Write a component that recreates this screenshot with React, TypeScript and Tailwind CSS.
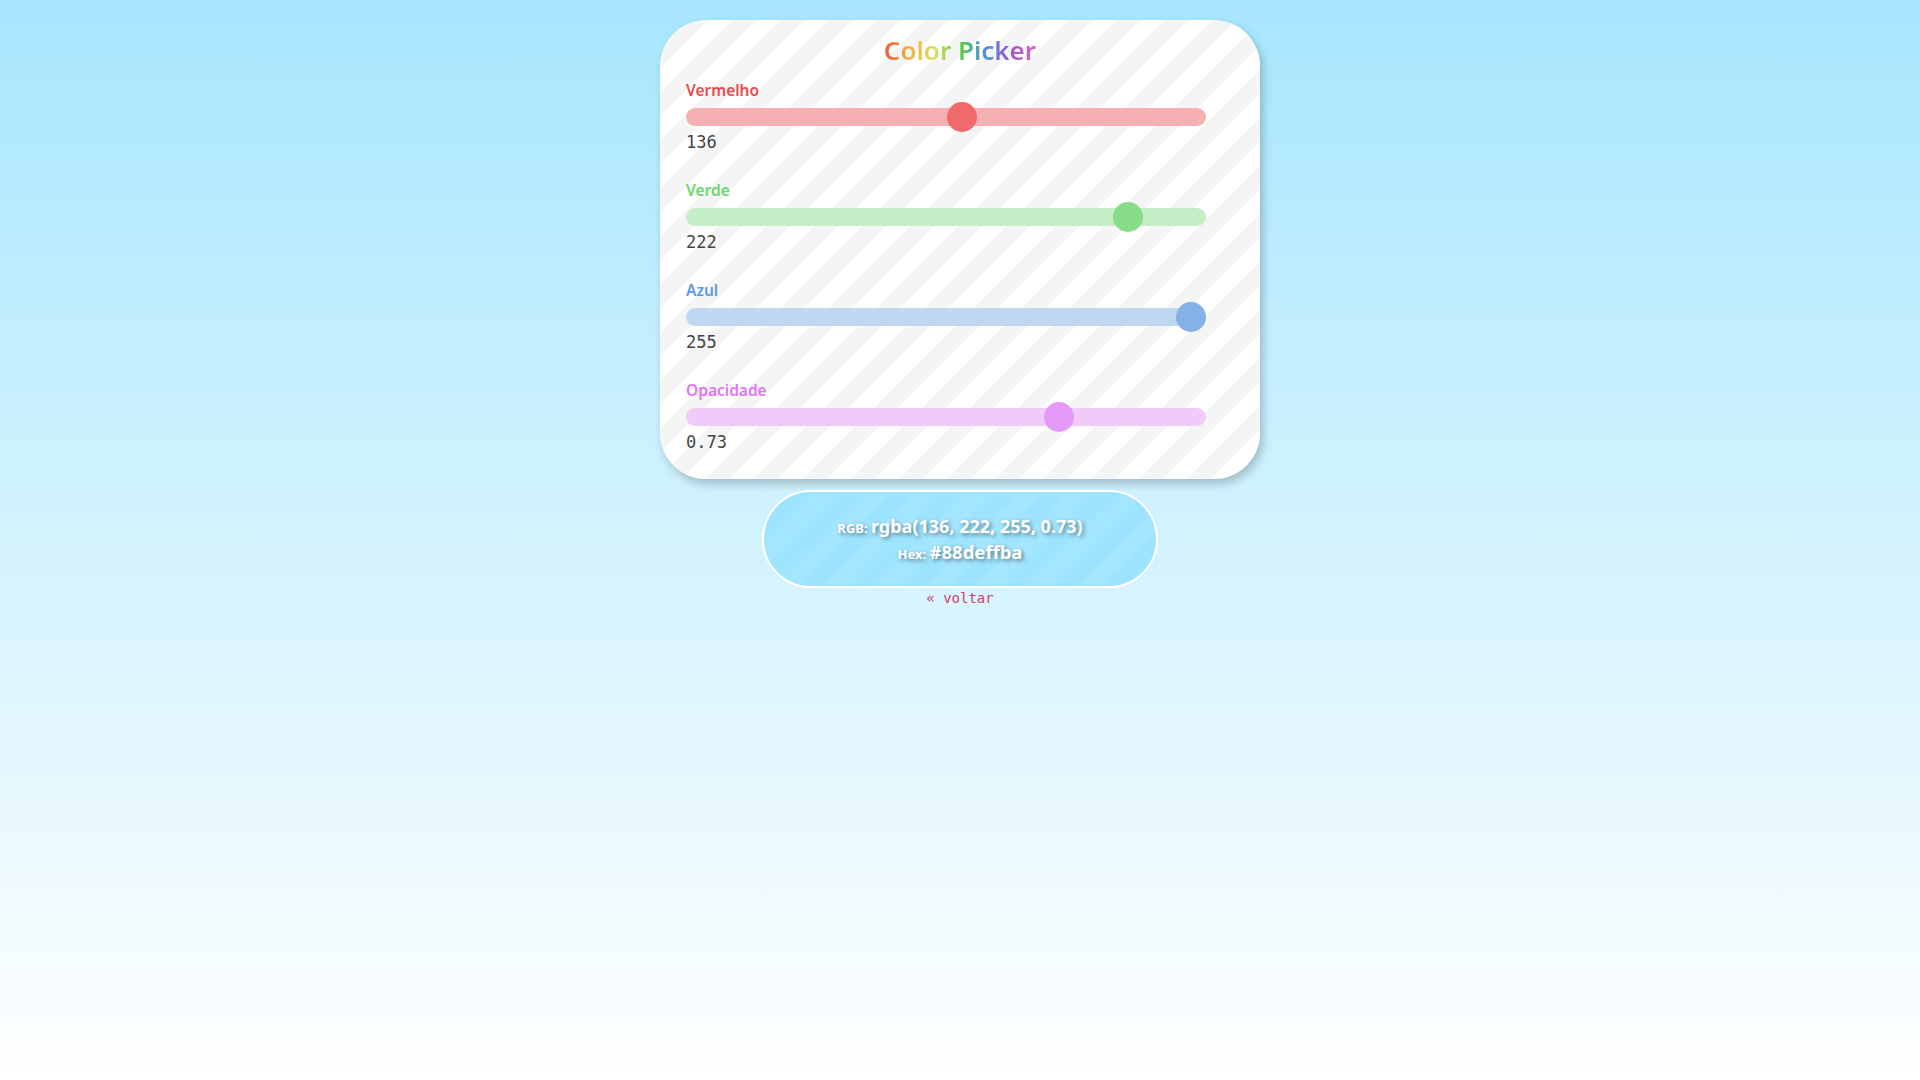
import React from 'react';

type Channel = {
  label: string;
  value: number;
  max: number;
  display: string;
  labelColor: string;
  trackColor: string;
  thumbColor: string;
};

const channels: Channel[] = [
  { label: 'Vermelho', value: 136, max: 255, display: '136', labelColor: 'text-[#f2474a]', trackColor: 'bg-[#f5b1b1]', thumbColor: 'bg-[#f06a6b]' },
  { label: 'Verde', value: 222, max: 255, display: '222', labelColor: 'text-[#6bd66b]', trackColor: 'bg-[#c4eec6]', thumbColor: 'bg-[#88dd88]' },
  { label: 'Azul', value: 255, max: 255, display: '255', labelColor: 'text-[#5d9be8]', trackColor: 'bg-[#c0d7f2]', thumbColor: 'bg-[#84b2e6]' },
  { label: 'Opacidade', value: 0.73, max: 1, display: '0.73', labelColor: 'text-[#e274f5]', trackColor: 'bg-[#f0cbfa]', thumbColor: 'bg-[#e59af9]' },
];

const Slider: React.FC<{ c: Channel }> = ({ c }) => {
  // thumb travels inside the track, 30px wide
  const pct = c.value / c.max;
  return (
    <div className="flex flex-col">
      <span className={`h-5 text-[15.5px] leading-5 font-semibold ${c.labelColor}`}>{c.label}</span>
      <div className={`relative mt-2 h-[18px] w-[520px] rounded-full ${c.trackColor}`}>
        <div
          className={`absolute -top-[6px] h-[30px] w-[30px] rounded-full ${c.thumbColor}`}
          style={{ left: `calc(${pct} * (100% - 30px))` }}
        />
      </div>
      <span className="mt-1 h-6 text-[17px] leading-6 text-[#444] font-['DejaVu_Sans_Mono',monospace]">{c.display}</span>
    </div>
  );
};

const App: React.FC = () => {
  return (
    <div className="min-h-screen w-full bg-[linear-gradient(to_bottom,#a7e6fe,#ffffff)] font-['Noto_Sans','Lato',sans-serif]">
      <div className="flex flex-col items-center pt-5">
        <div className="w-[600px] rounded-[46px] bg-[repeating-linear-gradient(135deg,#ffffff_0px,#ffffff_17px,#f5f5f5_17px,#f5f5f5_34px)] pl-[26px] pt-3 pb-[25px] shadow-[3px_5px_10px_rgba(0,0,0,0.22)]">
          <h1 className="pr-[26px] text-center text-[26px] leading-9 font-semibold">
            <span className="bg-[linear-gradient(to_right,#ee5a3c,#f0b040,#d9e060,#5ccc40,#4a90e0,#9a5ad0,#e060c0)] bg-clip-text text-transparent">
              Color Picker
            </span>
          </h1>
          <div className="mt-3 flex flex-col gap-[26px]">
            {channels.map((c) => (
              <Slider key={c.label} c={c} />
            ))}
          </div>
        </div>

        <div className="mt-[11px] flex h-[98px] w-[396px] flex-col items-center justify-center rounded-full border-2 border-white bg-[repeating-linear-gradient(135deg,rgba(255,255,255,0.08)_0px,rgba(255,255,255,0.08)_18px,transparent_18px,transparent_36px),linear-gradient(rgba(136,222,255,0.73),rgba(136,222,255,0.73))] text-white [text-shadow:2px_2px_4px_rgba(0,0,0,0.45)]">
          <div className="h-[25px] leading-[25px] font-bold">
            <span className="text-[13px]">RGB: </span>
            <span className="text-[18px]">rgba(136, 222, 255, 0.73)</span>
          </div>
          <div className="h-[25px] leading-[25px] font-bold">
            <span className="text-[13px]">Hex: </span>
            <span className="text-[18.5px]">#88deffba</span>
          </div>
        </div>

        <a href="#" className="mt-[2px] text-[14px] leading-4 text-[#d2406a] font-['DejaVu_Sans_Mono',monospace]">
          « voltar
        </a>
      </div>
    </div>
  );
};

export default App;
